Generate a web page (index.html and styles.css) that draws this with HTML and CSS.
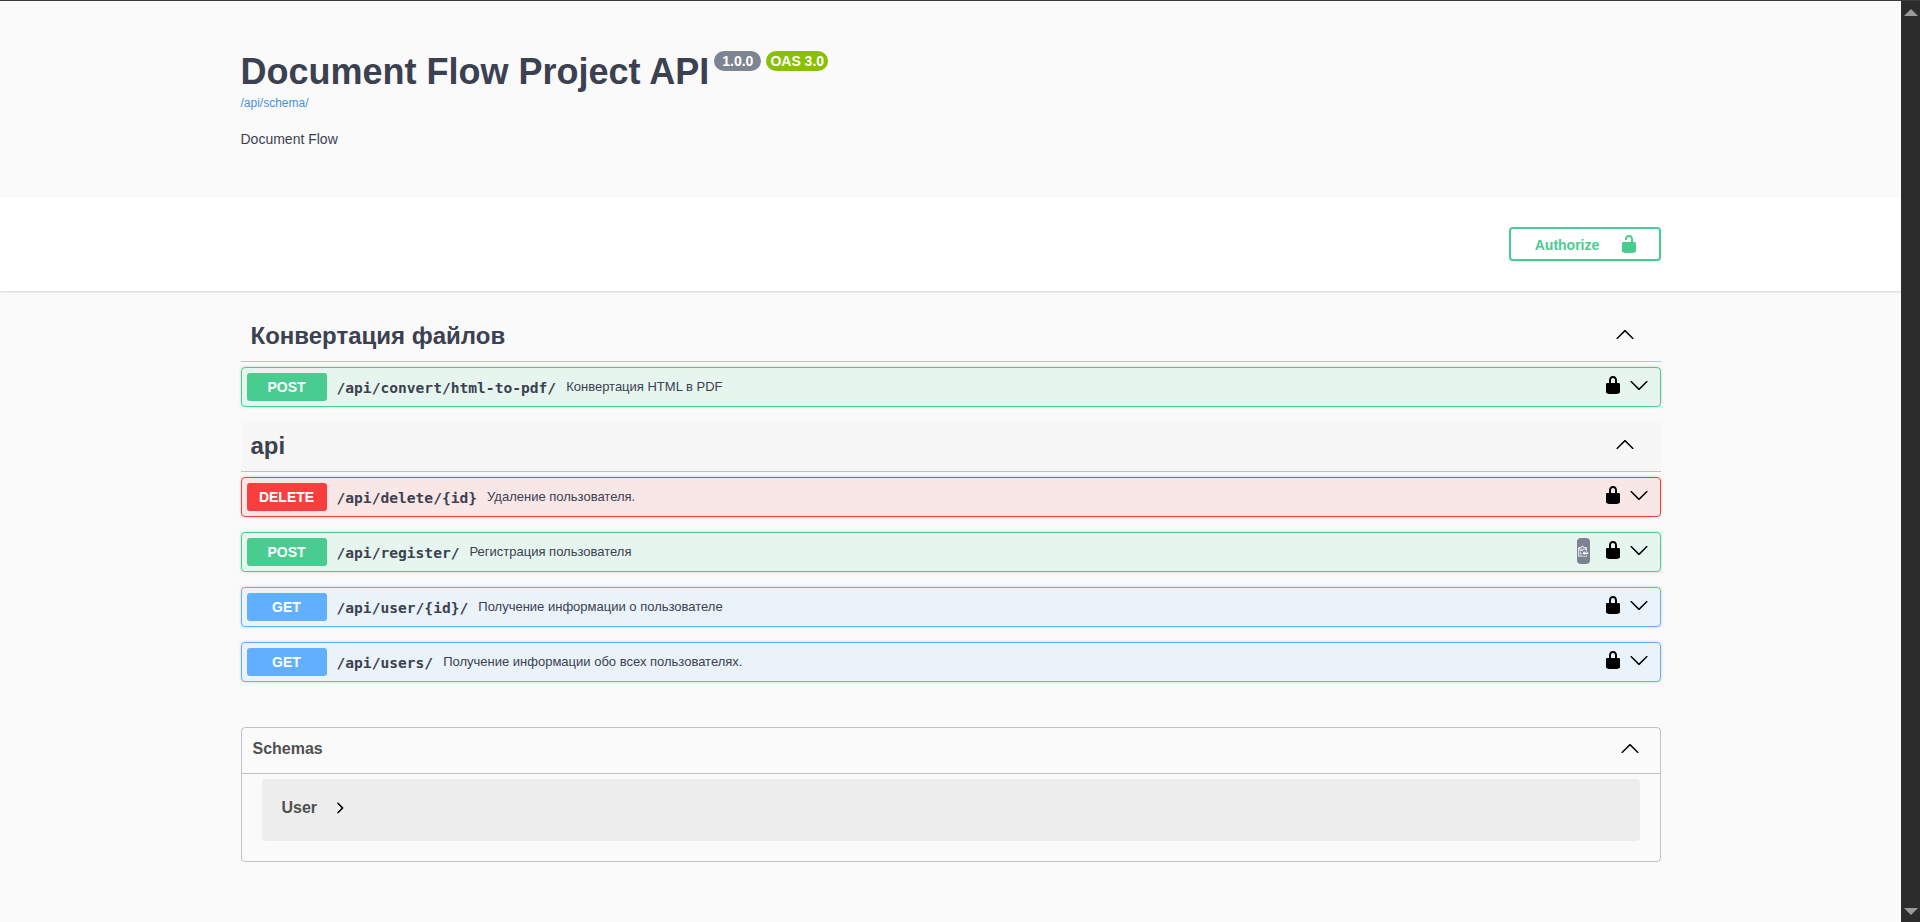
FILE: index.html
```html
<!DOCTYPE html>
<html lang="en">
<head>
<meta charset="UTF-8" />
<title>Document Flow Project API</title>
<link rel="stylesheet" href="styles.css">
</head>
<body>
  <svg class="sprites" xmlns="http://www.w3.org/2000/svg">
    <symbol id="arrow-down" viewBox="0 0 20 20">
      <path d="M17.418 6.109c.272-.268.709-.268.979 0s.271.701 0 .969l-7.908 7.83c-.27.268-.707.268-.979 0l-7.908-7.83c-.27-.268-.27-.701 0-.969.271-.268.709-.268.979 0L10 13.25l7.418-7.141z"/>
    </symbol>
    <symbol id="arrow-right" viewBox="0 0 20 20">
      <path d="M13.25 10L6.109 2.58c-.268-.27-.268-.707 0-.979.268-.27.701-.27.969 0l7.83 7.908c.268.27.268.707 0 .979l-7.83 7.908c-.268.27-.701.27-.969 0-.268-.269-.268-.707 0-.979L13.25 10z"/>
    </symbol>
    <symbol id="locked" viewBox="0 0 20 20">
      <path d="M15.8 8H14V5.6C14 2.703 12.665 1 10 1 7.334 1 6 2.703 6 5.6V8H4c-.553 0-1 .646-1 1.199V17c0 .549.428 1.139.951 1.307l1.197.387C5.672 18.861 6.55 19 7.1 19h5.8c.549 0 1.428-.139 1.951-.307l1.196-.387c.524-.167.953-.757.953-1.306V9.199C17 8.646 16.352 8 15.8 8zM12 8H8V5.199C8 3.754 8.797 3 10 3c1.203 0 2 .754 2 2.199V8z"/>
    </symbol>
    <symbol id="unlocked" viewBox="0 0 20 20">
      <path d="M15.8 8H14V5.6C14 2.703 12.665 1 10 1 7.334 1 6 2.703 6 5.6V6h2v-.801C8 3.754 8.797 3 10 3c1.203 0 2 .754 2 2.199V8H4c-.553 0-1 .646-1 1.199V17c0 .549.428 1.139.951 1.307l1.197.387C5.672 18.861 6.55 19 7.1 19h5.8c.549 0 1.428-.139 1.951-.307l1.196-.387c.524-.167.953-.757.953-1.306V9.199C17 8.646 16.352 8 15.8 8z"/>
    </symbol>
    <symbol id="clipboard" viewBox="0 0 15 16">
      <path d="M2 13h4v1H2v-1zm5-6H2v1h5V7zm2 3V8l-3 3 3 3v-2h5v-2H9zM4.5 9H2v1h2.5V9zM2 12h2.5v-1H2v1zm9 1h1v2c-.02.28-.11.52-.3.7-.19.18-.42.28-.7.3H1c-.55 0-1-.45-1-1V4c0-.55.45-1 1-1h3c0-1.11.89-2 2-2 1.11 0 2 .89 2 2h3c.55 0 1 .45 1 1v5h-1V6H1v9h10v-2zM2 5h8c0-.55-.45-1-1-1H8c-.55 0-1-.45-1-1s-.45-1-1-1-1 .45-1 1-.45 1-1 1H3c-.55 0-1 .45-1 1z"/>
    </symbol>
  </svg>

  <div class="page">
    <section class="info">
      <div class="wrapper">
        <div class="title-row">
          <h1>Document Flow Project API</h1>
          <span class="version">1.0.0</span>
          <span class="version oas">OAS 3.0</span>
        </div>
        <a class="schema-link" href="#">/api/schema/</a>
        <p class="description">Document Flow</p>
      </div>
    </section>

    <section class="scheme-bar">
      <div class="wrapper scheme-inner">
        <button class="authorize" type="button">
          <span class="authorize-text">Authorize</span>
          <svg class="authorize-lock"><use href="#unlocked"/></svg>
        </button>
      </div>
    </section>

    <main class="wrapper">
      <div class="tag">
        <h3>Конвертация файлов</h3>
        <svg class="arrow-up"><use href="#arrow-down"/></svg>
      </div>
      <div class="op post">
        <span class="method">POST</span>
        <span class="path">/api/convert/html-to-pdf/</span>
        <span class="summary">Конвертация HTML в PDF</span>
        <svg class="op-lock"><use href="#locked"/></svg>
        <svg class="op-arrow"><use href="#arrow-down"/></svg>
      </div>

      <div class="tag tag-hover">
        <h3>api</h3>
        <svg class="arrow-up"><use href="#arrow-down"/></svg>
      </div>
      <div class="op delete">
        <span class="method">DELETE</span>
        <span class="path">/api/delete/{id}</span>
        <span class="summary">Удаление пользователя.</span>
        <svg class="op-lock"><use href="#locked"/></svg>
        <svg class="op-arrow"><use href="#arrow-down"/></svg>
      </div>
      <div class="op post">
        <span class="method">POST</span>
        <span class="path">/api/register/</span>
        <span class="summary">Регистрация пользователя</span>
        <span class="copy"><svg><use href="#clipboard"/></svg></span>
        <svg class="op-lock"><use href="#locked"/></svg>
        <svg class="op-arrow"><use href="#arrow-down"/></svg>
      </div>
      <div class="op get">
        <span class="method">GET</span>
        <span class="path">/api/user/{id}/</span>
        <span class="summary">Получение информации о пользователе</span>
        <svg class="op-lock"><use href="#locked"/></svg>
        <svg class="op-arrow"><use href="#arrow-down"/></svg>
      </div>
      <div class="op get">
        <span class="method">GET</span>
        <span class="path">/api/users/</span>
        <span class="summary">Получение информации обо всех пользователях.</span>
        <svg class="op-lock"><use href="#locked"/></svg>
        <svg class="op-arrow"><use href="#arrow-down"/></svg>
      </div>

      <section class="models">
        <div class="models-head">
          <h4>Schemas</h4>
          <svg class="arrow-up"><use href="#arrow-down"/></svg>
        </div>
        <div class="model-box">
          <span class="model-name">User</span>
          <svg class="model-arrow"><use href="#arrow-right"/></svg>
        </div>
      </section>
    </main>
  </div>

  <div class="scrollbar">
    <span class="scroll-up"></span>
    <span class="scroll-down"></span>
  </div>
</body>
</html>
```

FILE: styles.css
```css
html, body {
  height: 100%;
}
body {
  margin: 0;
  display: flex;
  overflow: hidden;
  box-sizing: border-box;
  border-top: 1px solid #3b3b3b;
  background: #fafafa;
  font-family: "Liberation Sans", Arial, sans-serif;
  color: #3b4151;
}
.sprites {
  display: none;
}
.page {
  flex: 1;
  min-width: 0;
}
.wrapper {
  max-width: 1420px;
  margin: 0 auto;
  padding: 0 20px;
}
.scrollbar {
  width: 19px;
  background: #2c2c2c;
  display: flex;
  flex-direction: column;
  justify-content: space-between;
  align-items: center;
  padding: 8px 0 7px;
}
.scroll-up, .scroll-down {
  width: 0;
  height: 0;
  border-left: 7px solid transparent;
  border-right: 7px solid transparent;
}
.scroll-up {
  border-bottom: 7px solid #9b9b9b;
}
.scroll-down {
  border-top: 7px solid #9b9b9b;
}

/* info */
.info {
  height: 196px;
  padding-top: 50px;
  box-sizing: border-box;
}
.title-row {
  display: flex;
  align-items: flex-start;
}
h1 {
  margin: 0;
  font-size: 36px;
  line-height: 41px;
  font-weight: 700;
}
.version {
  margin-left: 5px;
  padding: 2px 8px;
  border-radius: 57px;
  background: #7d8492;
  color: #fff;
  font-size: 14px;
  line-height: 16px;
  font-weight: 700;
}
.oas {
  padding: 2px 4px;
  background: #89bf04;
}
.schema-link {
  display: block;
  margin-top: 4px;
  font-size: 12px;
  line-height: 14px;
  color: #4990e2;
  text-decoration: none;
}
.description {
  margin: 21px 0 0;
  font-size: 14px;
  line-height: 16px;
}

/* authorize bar */
.scheme-bar {
  height: 94px;
  background: #fff;
  box-shadow: 0 1px 2px 0 rgba(0, 0, 0, .15);
}
.scheme-inner {
  display: flex;
  justify-content: flex-end;
  padding-top: 30px;
}
.authorize {
  width: 152px;
  height: 34px;
  display: flex;
  align-items: center;
  justify-content: center;
  gap: 20px;
  padding: 0 0 0 5px;
  background: transparent;
  border: 2px solid #49cc90;
  border-radius: 4px;
  box-shadow: 0 1px 2px rgba(0, 0, 0, .1);
  color: #49cc90;
  font-family: "Liberation Sans", Arial, sans-serif;
  font-size: 14px;
  font-weight: 700;
}
.authorize-text {
  margin-top: 2px;
}
.authorize-lock {
  width: 20px;
  height: 20px;
  fill: #49cc90;
}

/* tag headers */
.tag {
  height: 50px;
  box-sizing: border-box;
  margin-bottom: 5px;
  padding: 0 26px 0 10px;
  display: flex;
  align-items: center;
  justify-content: space-between;
  border-bottom: 1px solid rgba(59, 65, 81, .3);
}
main > .tag:first-child {
  margin-top: 21px;
}
.tag-hover {
  background: #f7f7f7;
}
.tag h3 {
  margin: 0 0 2px;
  font-size: 24px;
  line-height: 32px;
  font-weight: 700;
}
.arrow-up {
  width: 20px;
  height: 20px;
  margin-bottom: 4px;
  transform: rotate(180deg);
}

/* operation rows */
.op {
  height: 40px;
  box-sizing: border-box;
  margin-bottom: 15px;
  padding: 0 11px 0 5px;
  display: flex;
  align-items: center;
  border: 1px solid;
  border-radius: 4px;
  box-shadow: 0 0 3px rgba(0, 0, 0, .19);
}
.post {
  background: rgba(73, 204, 144, .1);
  border-color: #49cc90;
}
.delete {
  background: rgba(249, 62, 62, .1);
  border-color: #f93e3e;
}
.get {
  background: rgba(97, 175, 254, .1);
  border-color: #61affe;
}
.method {
  width: 80px;
  flex: none;
  padding: 6px 0;
  border-radius: 3px;
  color: #fff;
  font-size: 14px;
  line-height: 16px;
  font-weight: 700;
  text-align: center;
}
.post .method {
  background: #49cc90;
}
.delete .method {
  background: #f93e3e;
}
.get .method {
  background: #61affe;
}
.path {
  padding: 0 10px;
  font-family: "DejaVu Sans Mono", monospace;
  font-size: 14.6px;
  font-weight: 700;
}
.summary {
  flex: 1;
  margin-bottom: 1px;
  font-size: 13px;
}
.copy {
  width: 13px;
  height: 26px;
  margin-right: 13px;
  margin-bottom: 2px;
  display: flex;
  align-items: center;
  justify-content: center;
  background: #7d8293;
  border-radius: 4px;
}
.copy svg {
  width: 11px;
  height: 14px;
  fill: #fff;
}
.op-lock {
  width: 20px;
  height: 20px;
  margin-right: 6px;
  margin-bottom: 4px;
}
.op-arrow {
  width: 20px;
  height: 20px;
  margin-bottom: 4px;
}

/* schemas */
.models {
  margin: 45px 0 0;
  border: 1px solid rgba(59, 65, 81, .3);
  border-radius: 4px;
  padding-bottom: 20px;
}
.models-head {
  height: 45px;
  padding: 0 20px 0 11px;
  display: flex;
  align-items: center;
  justify-content: space-between;
  border-bottom: 1px solid rgba(59, 65, 81, .3);
}
.models h4 {
  margin: 0 0 4px;
  font-size: 16px;
  font-weight: 700;
  color: #505050;
}
.model-box {
  margin: 5px 20px 0;
  height: 62px;
  padding: 0 20px 4px;
  box-sizing: border-box;
  display: flex;
  align-items: center;
  background: rgba(0, 0, 0, .05);
  border-radius: 4px;
}
.model-name {
  font-size: 16px;
  font-weight: 700;
  color: #505050;
  margin-right: 17px;
}
.model-arrow {
  width: 12px;
  height: 12px;
  stroke: #000;
  stroke-width: 1.5px;
}
```
